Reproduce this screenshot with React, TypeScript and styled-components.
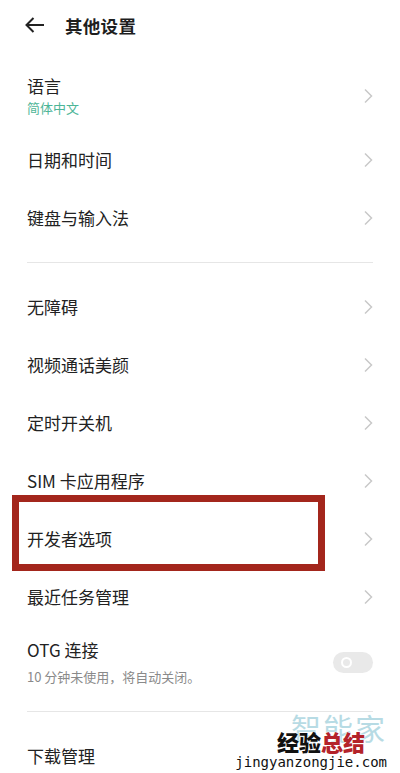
import React from "react";
import styled, { createGlobalStyle } from "styled-components";

const Global = createGlobalStyle`
  html, body { margin: 0; padding: 0; background: #fff; }
  body { font-family: "Noto Sans CJK SC", "Noto Sans", sans-serif; color: #222; }
`;

const Page = styled.div`
  position: relative;
  width: 400px;
  height: 773px;
  overflow: hidden;
  background: #fff;
`;

const Header = styled.div`
  display: flex;
  align-items: center;
  height: 50px;
  padding: 0 0 0 25px;
  gap: 20px;
`;

const Title = styled.div`
  font-size: 17.5px;
  font-weight: 700;
  color: #1e1e1e;
  letter-spacing: 0.3px;
`;

const Section = styled.div<{ $top?: number; $bottom?: number }>`
  display: flex;
  flex-direction: column;
  padding: ${(p) => p.$top ?? 0}px 0 ${(p) => p.$bottom ?? 0}px;
`;

const Row = styled.div<{ $h: number; $pt?: number }>`
  position: relative;
  display: flex;
  align-items: center;
  justify-content: space-between;
  box-sizing: border-box;
  height: ${(p) => p.$h}px;
  padding: ${(p) => p.$pt ?? 0}px 27px 0 27px;
`;

const TextCol = styled.div<{ $gap?: number }>`
  display: flex;
  flex-direction: column;
  gap: ${(p) => p.$gap ?? 2}px;
`;

const Label = styled.div`
  font-size: 17px;
  line-height: 22px;
  color: #222;
`;

const Sub = styled.div<{ $color: string }>`
  font-size: 13px;
  line-height: 18px;
  color: ${(p) => p.$color};
`;

const Divider = styled.div`
  height: 1px;
  margin: 0 27px;
  background: #e6e6e6;
`;

const Highlight = styled.div`
  position: absolute;
  left: 12px;
  top: -15px;
  box-sizing: border-box;
  width: 313px;
  height: 76px;
  border: 7px solid #a3261c;
  pointer-events: none;
`;

const Toggle = styled.div`
  width: 40px;
  height: 21px;
  border-radius: 11px;
  background: #e9e9e9;
  display: flex;
  align-items: center;
  padding-left: 8px;
  box-sizing: border-box;
`;

const Knob = styled.div`
  width: 7px;
  height: 7px;
  border-radius: 50%;
  border: 2.5px solid #fff;
`;

const Watermark = styled.div`
  position: absolute;
  right: 13px;
  bottom: 3px;
  display: flex;
  flex-direction: column;
  align-items: flex-end;
  pointer-events: none;
`;

const WmTop = styled.div`
  font-family: "Noto Sans CJK SC", sans-serif;
  font-size: 30px;
  line-height: 28px;
  color: #b7dbe4;
  letter-spacing: 2px;
  margin-right: 0px;
`;

const WmMid = styled.div`
  font-family: "Noto Sans CJK SC", sans-serif;
  font-size: 22px;
  font-weight: 900;
  line-height: 24px;
  margin-top: -12px;
  margin-right: 22px;
  color: #111;
  text-shadow: 0 0 2px #fff, 0 0 2px #fff;
`;

const Red = styled.span`
  color: #b4232a;
`;

const WmUrl = styled.div`
  font-family: "DejaVu Sans Mono", monospace;
  font-size: 14px;
  line-height: 16px;
  color: #111;
  margin-top: 1px;
  text-shadow: 0 0 2px #fff, 0 0 2px #fff;
`;

const Chevron = () => (
  <svg width="10" height="16" viewBox="0 0 10 16">
    <path d="M2 1.5 L8.5 8 L2 14.5" fill="none" stroke="#c9c9c9" strokeWidth="1.5" />
  </svg>
);

const Back = () => (
  <svg width="20" height="16" viewBox="0 0 20 16">
    <path d="M1.5 8 H19 M8.5 1 L1.5 8 L8.5 15" fill="none" stroke="#222" strokeWidth="2" />
  </svg>
);

type Item = { label: string; h: number; highlight?: boolean };

const group2: Item[] = [
  { label: "无障碍", h: 58 },
  { label: "视频通话美颜", h: 58 },
  { label: "定时开关机", h: 58 },
  { label: "SIM 卡应用程序", h: 58 },
  { label: "开发者选项", h: 58, highlight: true },
  { label: "最近任务管理", h: 58 },
];

export default function App() {
  return (
    <Page>
      <Global />
      <Header>
        <Back />
        <Title>其他设置</Title>
      </Header>
      <Section $bottom={15}>
        <Row $h={81} $pt={10}>
          <TextCol>
            <Label>语言</Label>
            <Sub $color="#4db597">简体中文</Sub>
          </TextCol>
          <Chevron />
        </Row>
        <Row $h={58}>
          <Label>日期和时间</Label>
          <Chevron />
        </Row>
        <Row $h={58}>
          <Label>键盘与输入法</Label>
          <Chevron />
        </Row>
      </Section>
      <Divider />
      <Section $top={15} $bottom={13}>
        {group2.map((it) => (
          <Row key={it.label} $h={it.h}>
            {it.highlight && <Highlight />}
            <Label>{it.label}</Label>
            <Chevron />
          </Row>
        ))}
        <Row $h={72}>
          <TextCol $gap={7}>
            <Label>OTG 连接</Label>
            <Sub $color="#8a8a8a">10 分钟未使用，将自动关闭。</Sub>
          </TextCol>
          <Toggle>
            <Knob />
          </Toggle>
        </Row>
      </Section>
      <Divider />
      <Section $top={15}>
        <Row $h={58}>
          <Label>下载管理</Label>
        </Row>
      </Section>
      <Watermark>
        <WmTop>智能家</WmTop>
        <WmMid>
          经验<Red>总结</Red>
        </WmMid>
        <WmUrl>jingyanzongjie.com</WmUrl>
      </Watermark>
    </Page>
  );
}
